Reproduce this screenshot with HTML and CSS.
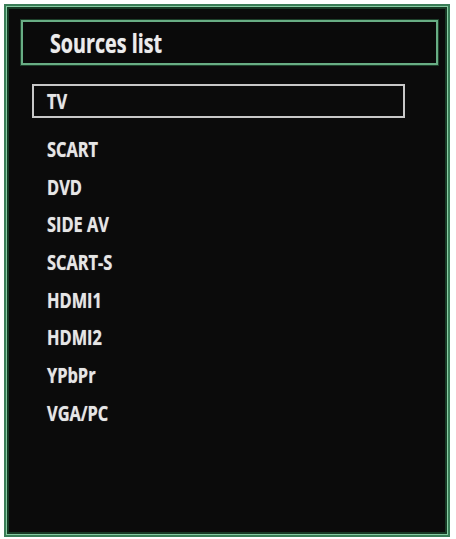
FILE: index.html
```html
<!DOCTYPE html>
<html lang="en">
<head>
<meta charset="utf-8">
<title>Sources list</title>
<link rel="stylesheet" href="styles.css">
</head>
<body>
<div class="panel">
  <div class="title"><span class="label">Sources list</span></div>
  <ul class="list">
    <li class="item selected"><span class="label">TV</span></li>
    <li class="item"><span class="label">SCART</span></li>
    <li class="item"><span class="label">DVD</span></li>
    <li class="item"><span class="label">SIDE AV</span></li>
    <li class="item"><span class="label">SCART-S</span></li>
    <li class="item"><span class="label">HDMI1</span></li>
    <li class="item"><span class="label">HDMI2</span></li>
    <li class="item"><span class="label">YPbPr</span></li>
    <li class="item"><span class="label">VGA/PC</span></li>
  </ul>
</div>
</body>
</html>
```
FILE: styles.css
```css
html, body {
  margin: 0;
  padding: 0;
  background: #ffffff;
}
body {
  font-family: "Open Sans", "DejaVu Sans", sans-serif;
  font-weight: bold;
  color: #e6e6e6;
}
.label {
  display: inline-block;
  white-space: nowrap;
  transform: scaleX(0.78);
  transform-origin: left center;
  text-shadow: 0 0 1px rgba(255, 255, 255, 0.5);
}
.panel {
  box-sizing: border-box;
  margin: 4px 0 0 4px;
  width: 446px;
  height: 533px;
  background: #0b0b0b;
  border: 2px solid #3a7d57;
  box-shadow: inset 0 0 0 1px #86cda3, inset 0 0 0 3px #173a25;
  padding: 14px 10px 0 15px;
}
.title {
  box-sizing: border-box;
  height: 45px;
  display: flex;
  align-items: center;
  padding-left: 27px;
  border: 2px solid #68ad84;
  box-shadow: 0 0 0 1px #1d3f2a;
  background: #0a0a0a;
  font-size: 27px;
  color: #ececec;
}
.title .label {
  transform: scaleX(0.73);
}
.list {
  list-style: none;
  margin: 19px 0 0 0;
  padding: 0;
  font-size: 21px;
}
.item {
  box-sizing: border-box;
  height: 37.7px;
  display: flex;
  align-items: center;
  padding-left: 26px;
}
.item.selected {
  height: 34px;
  width: 373px;
  margin-left: 11px;
  margin-bottom: 12px;
  padding-left: 13px;
  border: 2px solid #c8c8c8;
}
```
